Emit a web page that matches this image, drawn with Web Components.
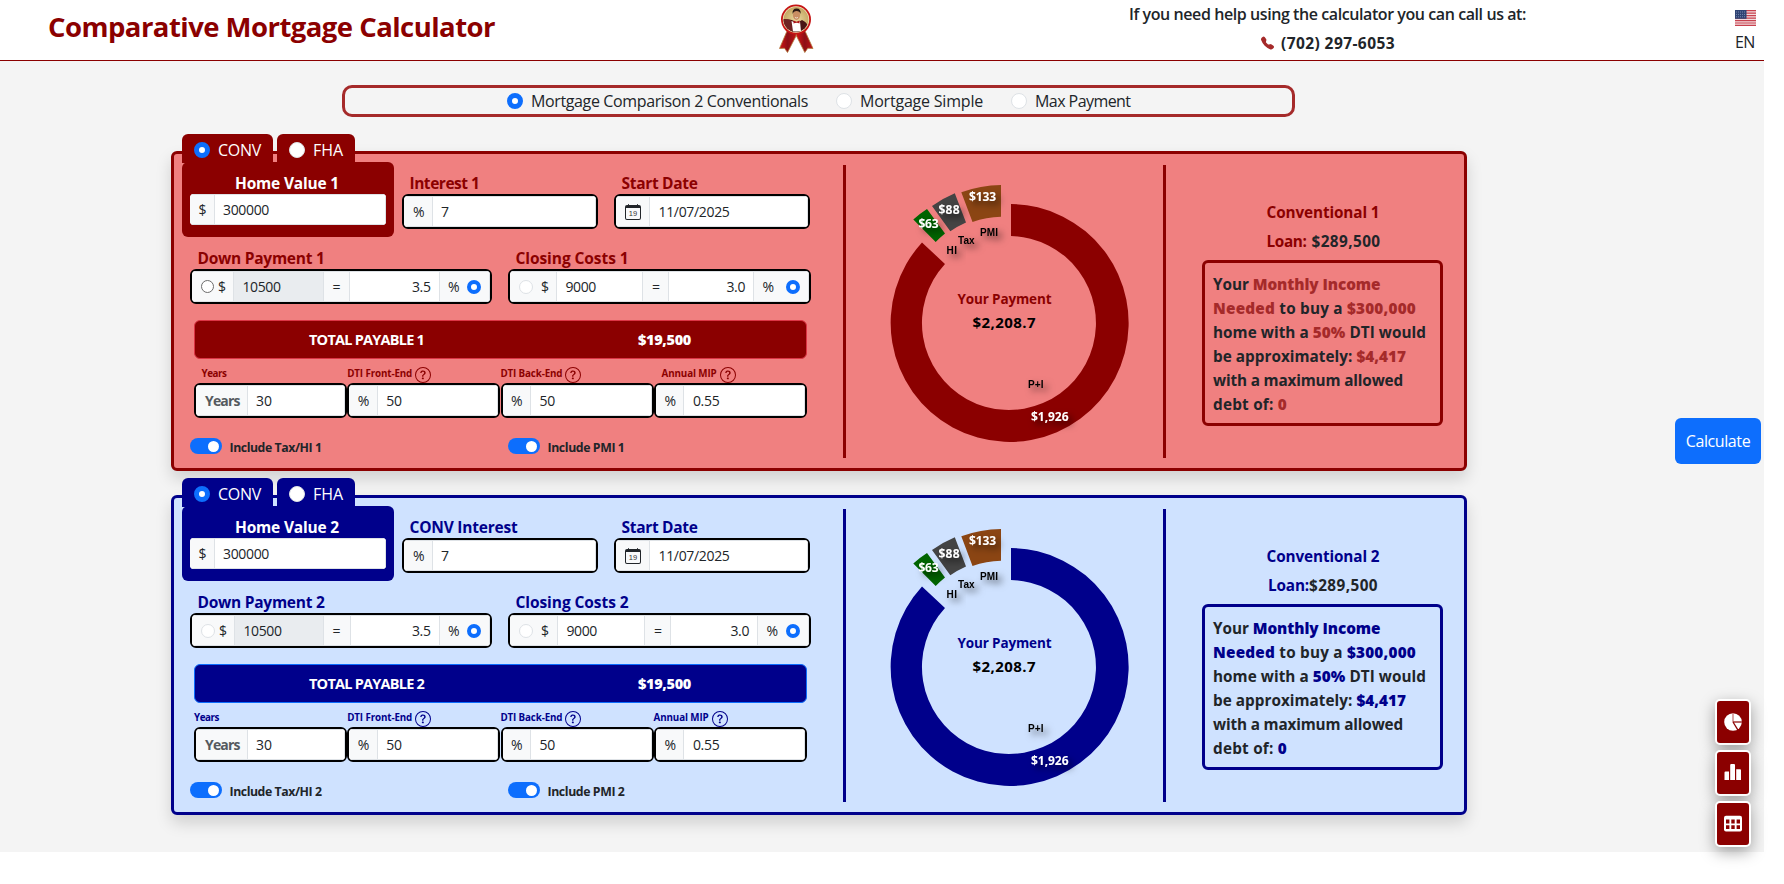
<!DOCTYPE html>
<html lang="en">
<head>
<meta charset="utf-8">
<title>Comparative Mortgage Calculator</title>
<style>
  html, body { margin: 0; background: #fff; }
  body { font-family: "Open Sans", "Noto Sans", sans-serif; font-size: 16px; line-height: 24px; color: #212529; height: 884px; overflow: hidden; }
</style>
</head>
<body>
<mortgage-app></mortgage-app>
<script>
const make = (name, html, setup) => {
  customElements.define(name, class extends HTMLElement {
    constructor() { super(); this.attachShadow({ mode: 'open' }); }
    connectedCallback() {
      if (this.ready) return;
      this.ready = true;
      this.shadowRoot.innerHTML = typeof html === 'function' ? html(this) : html;
      if (setup) setup(this);
    }
  });
};
const a = (el, n, d = '') => el.getAttribute(n) ?? d;

/* page */
make('mortgage-app', `
<style>
  :host { display: block; width: 1764px; height: 852px; background: #f4f4f4; position: relative; }
  main { display: flex; flex-direction: column; padding: 24px 0 0 171px; }
  mode-picker { margin-left: 171px; }
  loan-card { margin-top: 34px; }
  loan-card + loan-card { margin-top: 24px; }
  .calc { position: absolute; left: 1675px; top: 418px; }
  .tools { position: absolute; left: 1715px; top: 699px; display: grid; gap: 5px; }
</style>
<page-header></page-header>
<main>
  <mode-picker></mode-picker>
  <loan-card num="1" interest="Interest 1" ilabel="70" main="#8b0000" back="#f08080" edge="#dc3545" accent="#a52a2a"></loan-card>
  <loan-card num="2" interest="CONV Interest" ilabel="108" main="#00008b" back="#cfe2ff" edge="#0d6efd" accent="#00008b"></loan-card>
</main>
<calc-button class="calc"></calc-button>
<div class="tools">
  <tool-button><svg width="18" height="18" viewBox="0 0 18 18"><circle cx="9" cy="9" r="8.800" fill="#fff"/><path d="M9 0V9" stroke="#c98080" stroke-width="1.400"/><path d="M9 9H18" stroke="#a84040" stroke-width="1.600"/><path d="M9 9L13.800 16.800" stroke="#8b0000" stroke-width="1.300"/></svg></tool-button>
  <tool-button><svg width="18" height="18" viewBox="0 0 18 18"><path d="M.5 8.500q0-1 1-1H5V16H.5zM6.200 1q0-1 1-1H10q1 0 1 1V16H6.200zM12.200 5.200H16q1 0 1 1V16H12.200z" fill="#fff"/></svg></tool-button>
  <tool-button><svg width="18" height="18" viewBox="0 0 18 18"><rect y=".8" width="18" height="15.800" rx="2" fill="#fff"/><path d="M2 4.600h3.400v3.900H2zM7.300 4.600h3.400v3.900H7.300zM12.600 4.600H16v3.900h-3.400zM2 10.200h3.400v3.900H2zM7.300 10.200h3.400v3.900H7.300zM12.600 10.200H16v3.900h-3.400z" fill="#8b0000"/></svg></tool-button>
</div>`);

make('page-header', `
<style>
  :host { display: grid; grid-template-columns: 779px 350px 397px 209px 1fr; height: 60px; background: #fff; border-bottom: 1px solid #8b0000; }
  h1 { margin: 0; padding: 8px 0 0 48px; font-size: 27.500px; line-height: 38px; font-weight: 700; color: #8b0000; }
  .badge { padding-top: 4px; height: 50px; }
  .help { padding-top: 2px; font-weight: 550; display: flex; flex-direction: column; gap: 5px; }
  .phone { display: flex; align-items: center; padding-left: 132px; gap: 7px; font-weight: 700; }
  .lang { grid-column: 5; padding-top: 10px; display: flex; flex-direction: column; gap: 4px; }
  svg { display: block; }
</style>
<h1><fit-text w="447">Comparative Mortgage Calculator</fit-text></h1>
<div class="badge"><svg width="35" height="50" viewBox="0 0 35 50">
  <defs><linearGradient id="r"><stop stop-color="#d41416"/><stop offset=".5" stop-color="#8c0f16"/><stop offset="1" stop-color="#c01216"/></linearGradient>
  <radialGradient id="g"><stop stop-color="#e9d8a0"/><stop offset="1" stop-color="#b8974e"/></radialGradient><clipPath id="c"><circle cx="17" cy="15.500" r="12.400"/></clipPath></defs>
  <path d="M8 27L.5 44.500l5-.3L8.500 48.500 17 32V27z" fill="url(#r)" stroke="#b07a3a" stroke-width=".8"/>
  <path d="M26 27l8 17.500-5.200-.3-3 4.300L17.500 32V27z" fill="url(#r)" stroke="#b07a3a" stroke-width=".8"/>
  <circle cx="17" cy="15.600" r="15" fill="#c51414"/><circle cx="17" cy="15.500" r="13.200" fill="#efe3b8"/>
  <g clip-path="url(#c)"><rect width="35" height="30" fill="url(#g)"/><path d="M3 16q6-1 10 0l5 3 5-3q5 2 8 8v8H4z" fill="#4a1414"/><path d="M3 15q5-.5 9 1l3 12H5z" fill="#6d2222"/><path d="M12.500 17l5 2 3.500-1.500 1 10H14z" fill="#fff"/><path d="M14.500 16.500l3 1.200 3-1.200v3l-3-1-3 1z" fill="#b01218"/><ellipse cx="17.500" cy="11" rx="3.600" ry="5" fill="#c98e63"/><path d="M13.600 10q-.6-5.500 4-5.500t4 5.500q-1-3-4-3t-4 3z" fill="#2a1712"/><path d="M16 13.500q1.500 1 3 0" stroke="#fff" stroke-width=".7" fill="none"/></g>
</svg></div>
<div class="help">
  <fit-text w="397">If you need help using the calculator you can call us at:</fit-text>
  <div class="phone"><svg width="13" height="14" viewBox="0 0 16 16"><path fill="#a52a2a" d="M1.885.511a1.745 1.745 0 0 1 2.610.163L6.290 2.980c.329.423.445.974.315 1.494l-.547 2.190a.68.68 0 0 0 .178.643l2.457 2.457a.68.68 0 0 0 .644.178l2.189-.547a1.750 1.750 0 0 1 1.494.315l2.306 1.794c.829.645.905 1.870.163 2.611l-1.034 1.034c-.740.740-1.846 1.065-2.877.702a18.600 18.600 0 0 1-7.010-4.420 18.600 18.600 0 0 1-4.420-7.009c-.362-1.030-.037-2.137.703-2.877z"/></svg><fit-text w="114" style="font-size:15.500px">(702) 297-6053</fit-text></div>
</div>
<div class="lang">
  <svg width="21" height="16" viewBox="0 0 21 16"><rect width="21" height="16" fill="#f3dcdf"/><path d="M0 .6h21M0 3.200h21M0 5.700h21M0 8.200h21M0 10.600h21M0 13h21M0 15.400h21" stroke="#c8414e" stroke-width="1.200"/><rect width="11.500" height="8.800" fill="#2f4373"/><path d="M1 2h10M1 4.400h10M1 6.800h10" stroke="#8b9ac0" stroke-width=".8" stroke-dasharray="1 1"/></svg>
  <fit-text w="19.500">EN</fit-text>
</div>`);

make('mode-picker', `
<style>
  :host { display: flex; box-sizing: border-box; width: 953px; height: 32px; border: 3px solid #a52a2a; border-radius: 10px; padding-left: 162px; align-items: center; }
  fit-text { margin-left: 8px; }
  .n { margin-left: 28px; }
</style>
<radio-dot size="16" on></radio-dot><fit-text w="277">Mortgage Comparison 2 Conventionals</fit-text>
<radio-dot class="n" size="16"></radio-dot><fit-text w="123">Mortgage Simple</fit-text>
<radio-dot class="n" size="16"></radio-dot><fit-text w="95.500">Max Payment</fit-text>`);

make('radio-dot', el => `
<style>
  :host { display: block; flex: none; box-sizing: border-box; width: ${a(el, 'size')}px; height: ${a(el, 'size')}px; border-radius: 50%; background: #fff; border: 1px solid #dee2e6; }
  :host([on]) { border: ${a(el, 'size') / 3.200}px solid #0d6efd; }
  :host([plain]) { border: 1px solid #6c6c6c; }
</style>`);

make('calc-button', `
<style>
  :host { display: grid; place-items: center; width: 86px; height: 46px; border-radius: 6px; background: #0d6efd; color: #fff; }
</style><fit-text w="64.500">Calculate</fit-text>`);

make('tool-button', `
<style>
  :host { display: grid; place-items: center; box-sizing: border-box; width: 36px; height: 46px; border: 2px solid #fff; border-radius: 5px; background: #8b0000; box-shadow: 0 5px 15px rgba(0,0,0,.35); }
  ::slotted(svg) { display: block; }
</style><slot></slot>`);

/* input group: pieces divided by a thin line */
make('input-group', `
<style>
  :host { display: flex; box-sizing: border-box; height: 35px; border: 2px solid #000; border-radius: 6px; background: #fff; overflow: hidden; font-size: 14px; line-height: 31px; }
  :host([bare]) { height: 31px; border: 0; border-radius: 4px; }
</style><slot></slot>`);
make('group-cell', el => `
<style>
  :host { display: flex; align-items: center; box-sizing: border-box; width: ${a(el, 'w')}px; flex: ${a(el, 'w') ? 'none' : '1'}; height: 31px; padding-left: ${a(el, 'l', 0)}px; padding-right: ${a(el, 'r', 0)}px; gap: ${a(el, 'gap', 0)}px; background: #fff; border: 1px solid #dee2e6; border-left-width: 0; }
  :host([addon]) { background: #f8f9fa; }
  :host([off]) { background: #e9ecef; }
  :host([end]) { justify-content: flex-end; }
</style><slot></slot>`);

make('info-label', el => `
<style>
  :host { display: flex; box-sizing: border-box; width: 153.200px; height: 24px; padding-left: ${a(el, 'l', 0)}px; gap: 3px; font-size: 9.800px; line-height: 24px; font-weight: 700; }
  svg { margin-top: 8px; }
  fit-text { margin-top: 3px; }
</style><fit-text w="${a(el, 'w')}">${el.textContent}</fit-text>${el.hasAttribute('help') ? `<svg width="16" height="16" viewBox="0 0 16 16" fill="currentColor"><path d="M8 15A7 7 0 1 1 8 1a7 7 0 0 1 0 14m0 1A8 8 0 1 0 8 0a8 8 0 0 0 0 16"/><path d="M5.255 5.786a.237.237 0 0 0 .241.247h.825c.138 0 .248-.113.266-.25.090-.656.540-1.134 1.342-1.134.686 0 1.314.343 1.314 1.168 0 .635-.374.927-.965 1.371-.673.489-1.206 1.060-1.168 1.987l.003.217a.25.25 0 0 0 .25.246h.811a.25.25 0 0 0 .25-.25v-.105c0-.718.273-.927 1.010-1.486.609-.463 1.244-.977 1.244-2.056 0-1.511-1.276-2.241-2.673-2.241-1.267 0-2.655.590-2.750 2.286m1.557 5.763c0 .533.425.927 1.010.927.609 0 1.028-.394 1.028-.927 0-.552-.420-.940-1.029-.940-.584 0-1.009.388-1.009.940"/></svg>` : ''}`);

make('switch-row', el => `
<style>
  :host { display: flex; gap: 7.500px; font-size: 12.300px; font-weight: 700; color: #212529; line-height: 18px; height: 16px; }
  i { width: 32px; height: 16px; border-radius: 8px; background: #0d6efd; display: flex; justify-content: flex-end; align-items: center; box-sizing: border-box; padding-right: 3px; }
  i::after { content: ""; width: 11px; height: 11px; border-radius: 50%; background: #fff; }
  fit-text { margin-top: 1px; }
</style><i></i><fit-text w="${a(el, 'w')}">${el.textContent}</fit-text>`);

make('payment-chart', el => `
<style>
  :host { display: block; }
  svg { display: block; }
  .v { font: 700 12px "Open Sans", sans-serif; fill: #fff; filter: url(#s); }
  .k { font: 700 10px "Liberation Sans", sans-serif; fill: #000; filter: url(#s); }
  .c { font-family: "Open Sans", sans-serif; }
</style>
<svg width="317" height="293" viewBox="846 165 317 293">
  <defs><filter id="s" x="-60%" y="-80%" width="240%" height="300%"><feDropShadow dx="4" dy="4" stdDeviation="3.500" flood-color="#000" flood-opacity=".6"/></filter></defs>
  <path fill="${a(el, 'color')}" d="M1011 204A119 119 0 1 1 922 242.500L945 264A87 87 0 1 0 1011 236z"/>
  <path fill="#8b4513" d="M961.300 192.300A119 119 0 0 1 1001 185V216.800A87 87 0 0 0 972.500 222z"/>
  <path fill="#444" d="M932 206A119 119 0 0 1 954.800 193.300L966 222.400A87 87 0 0 0 950.300 231.300z"/>
  <path fill="#006400" d="M913.300 219.400A119 119 0 0 1 927 209L945 233.400A87 87 0 0 0 935.700 242z"/>
  <text class="v" x="969" y="201" textLength="27">$133</text>
  <text class="v" x="938.500" y="214" textLength="21">$88</text>
  <text class="v" x="918.500" y="228" textLength="20">$63</text>
  <text class="v" x="1031" y="421" textLength="37.500">$1,926</text>
  <text class="k" x="980" y="236" textLength="18">PMI</text>
  <text class="k" x="958" y="244" textLength="16.500">Tax</text>
  <text class="k" x="946.500" y="254" textLength="10.500">HI</text>
  <text class="k" x="1028" y="388" textLength="15.500">P+I</text>
  <text class="c" x="957.500" y="304" textLength="94" font-size="13.500" font-weight="700" fill="${a(el, 'color')}">Your Payment</text>
  <text class="c" x="972.500" y="328" textLength="63" font-size="15" font-weight="700" fill="#000">$2,208.7</text>
</svg>`);

make('loan-summary', el => {
  const n = a(el, 'num'), two = n === '2';
  return `
<style>
  :host { display: flex; flex-direction: column; width: 298px; box-sizing: border-box; padding: 45px 0 0 36px; font-size: 15.300px; line-height: 26px; font-weight: 700; }
  fit-text { height: 24px; }
  .head { color: ${a(el, 'color')}; margin-left: 64.500px; }
  .loan { display: flex; gap: ${two ? 0 : 5}px; margin: 5px 0 8px ${two ? 66 : 64.500}px; }
  .loan :first-child { color: ${a(el, 'color')}; }
  .box { box-sizing: border-box; width: 241px; height: 166px; border: 3px solid ${a(el, 'color')}; border-radius: 6px; padding: 8px; }
  b { font-weight: 800; color: ${a(el, 'accent')}; }
</style>
<fit-text class="head" w="113">Conventional ${n}</fit-text>
<div class="loan"><fit-text w="${two ? 41 : 40}">Loan:</fit-text><fit-text w="69">$289,500</fit-text></div>
<div class="box">
  <fit-text w="167.500">Your <b>Monthly Income</b></fit-text>
  <fit-text w="203">${'<b>Needed</b> to buy a <b>$300,000</b>'}</fit-text>
  <fit-text w="213">home with a <b>50%</b> DTI would</fit-text>
  <fit-text w="193">be approximately: <b>$4,417</b></fit-text>
  <fit-text w="190">with a maximum allowed</fit-text>
  <fit-text w="74">debt of: <b>0</b></fit-text>
</div>`;
});

make('loan-card', el => {
  const n = a(el, 'num'), two = n === '2', d = two ? 1 : 0;
  return `
<style>
  :host { display: flex; box-sizing: border-box; width: 1296px; height: 320px; border: 3px solid ${a(el, 'main')}; border-radius: 6px; background: ${a(el, 'back')}; box-shadow: 0 8px 16px rgba(0,0,0,.15); --main: ${a(el, 'main')}; }
  .form { width: 669px; box-sizing: border-box; padding-left: 8px; color: var(--main); }
  .tabs { display: flex; gap: 4px; height: 29px; margin: -20px 0 -1px; }
  .tab { display: flex; align-items: center; box-sizing: border-box; gap: 8px; height: 29px; padding: 0 0 0 12px; border-radius: 6px 6px 0 0; background: var(--main); color: #fff; }
  .tab radio-dot { margin-bottom: -2px; } .tab fit-text { margin-bottom: -3px; }
  .tab:first-child { width: 91px; } .tab:last-child { width: 78px; }
  .row { display: flex; }
  .home { width: 212px; height: 75px; box-sizing: border-box; padding: 8px 8px 0; border-radius: 6px; background: var(--main); color: #fff; }
  .lbl { font-weight: 700; font-size: 15.500px; margin-left: 7.500px; height: 24px; line-height: 26px; }
  .home .lbl { margin-left: 45px; }
  .col { padding-top: 8px; width: 196px; margin-left: 8px; }
  .col + .col { margin-left: 16px; }
  .row2 > div { margin: 8px 0 0 8px; width: 302px; }
  .row2 > div + div { margin-left: 16px; width: 303px; }
  input-group { color: #212529; }
  .total { display: flex; box-sizing: border-box; margin: 16px 0 0 12px; width: 613px; height: 39px; border: 1px solid ${a(el, 'edge')}; border-radius: 6px; background: var(--main); color: #fff; font-weight: 700; font-size: 14.500px; line-height: 38px; padding-left: 114px; }
  .total fit-text + fit-text { margin-left: 214px; font-weight: 800; }
  .labels, .four { margin-left: 12px; display: flex; }
  .four { display: grid; grid-template-columns: 153px 153px 153px 153px; gap: .3px; }
  .switches { display: grid; grid-template-columns: 318px 1fr; margin: 20px 0 0 8px; }
  .chart { box-sizing: border-box; width: 323px; margin: 11px 0 10px; border: solid var(--main); border-width: 0 3px; }
</style>
<div class="form">
  <div class="tabs">
    <div class="tab"><radio-dot size="16" on></radio-dot><fit-text w="43">CONV</fit-text></div>
    <div class="tab"><radio-dot size="16"></radio-dot><fit-text w="30">FHA</fit-text></div>
  </div>
  <div class="row">
    <div class="home"><fit-text class="lbl" w="104">Home Value ${n}</fit-text>
      <input-group bare><group-cell addon w="25" l="8.500"><fit-text w="7">$</fit-text></group-cell><group-cell l="8"><fit-text w="46">300000</fit-text></group-cell></input-group></div>
    <div class="col"><fit-text class="lbl" w="${a(el, 'ilabel')}">${a(el, 'interest')}</fit-text>
      <input-group><group-cell addon w="29" l="9"><fit-text w="11">%</fit-text></group-cell><group-cell l="8">7</group-cell></input-group></div>
    <div class="col"><fit-text class="lbl" w="76">Start Date</fit-text>
      <input-group><group-cell addon w="34" l="9"><svg width="16" height="16" viewBox="0 0 16 16"><path d="M3.500 0a.5.5 0 0 1 .5.5V1h8V.5a.5.5 0 0 1 1 0V1h1a2 2 0 0 1 2 2v11a2 2 0 0 1-2 2H2a2 2 0 0 1-2-2V3a2 2 0 0 1 2-2h1V.5a.5.5 0 0 1 .5-.5M1 4v10a1 1 0 0 0 1 1h12a1 1 0 0 0 1-1V4z" fill="#212529"/><text x="3.800" y="12.300" font-family="Liberation Sans" font-size="7.500" fill="#333" textLength="8.400">19</text></svg></group-cell><group-cell l="8.500"><fit-text w="71">11/07/2025</fit-text></group-cell></input-group></div>
  </div>
  <div class="row row2">
    <div><fit-text class="lbl" w="127">Down Payment ${n}</fit-text>
      <input-group><group-cell addon w="${41.500 + d}" l="9" gap="4"><radio-dot size="${two ? 14 : 13}" ${two ? '' : 'plain'}></radio-dot><fit-text w="7">$</fit-text></group-cell><group-cell off w="${90 - d}" l="9"><fit-text w="38">10500</fit-text></group-cell><group-cell addon w="${26 + d}" l="9">=</group-cell><group-cell end w="${90 - d}" r="8"><fit-text w="18.500">3.5</fit-text></group-cell><group-cell addon l="8.500" gap="8"><fit-text w="11">%</fit-text><radio-dot size="14" on></radio-dot></group-cell></input-group></div>
    <div><fit-text class="lbl" w="113">Closing Costs ${n}</fit-text>
      <input-group><group-cell addon w="${47 + d}" l="9" gap="8"><radio-dot size="14"></radio-dot><fit-text w="7">$</fit-text></group-cell><group-cell w="${two ? 87 : 86}" l="8.500"><fit-text w="30.500">9000</fit-text></group-cell><group-cell addon w="26" l="9">=</group-cell><group-cell end w="${two ? 87 : 85}" r="8"><fit-text w="18.500">3.0</fit-text></group-cell><group-cell addon l="8.500" gap="${two ? 8.500 : 12.500}"><fit-text w="11">%</fit-text><radio-dot size="14" on></radio-dot></group-cell></input-group></div>
  </div>
  <div class="total"><fit-text w="115">TOTAL PAYABLE ${n}</fit-text><fit-text w="53">$19,500</fit-text></div>
  <div class="labels"><info-label w="25" l="${two ? 0 : 7.500}">Years</info-label><info-label help w="65">DTI Front-End</info-label><info-label help w="62">DTI Back-End</info-label><info-label help w="55" l="${two ? 0 : 8}">Annual MIP</info-label></div>
  <div class="four">
    <input-group><group-cell addon w="51.500" l="9"><fit-text w="34.500" style="font-weight:700;color:#555a5f">Years</fit-text></group-cell><group-cell l="8.500"><fit-text w="16">30</fit-text></group-cell></input-group>
    <input-group><group-cell addon w="28.500" l="8.500"><fit-text w="11">%</fit-text></group-cell><group-cell l="8.500"><fit-text w="15.500">50</fit-text></group-cell></input-group>
    <input-group><group-cell addon w="28.500" l="8.500"><fit-text w="11">%</fit-text></group-cell><group-cell l="8.500"><fit-text w="15.500">50</fit-text></group-cell></input-group>
    <input-group><group-cell addon w="28.500" l="8.500"><fit-text w="11">%</fit-text></group-cell><group-cell l="8.500"><fit-text w="26.500">0.55</fit-text></group-cell></input-group>
  </div>
  <div class="switches"><switch-row w="92">Include Tax/HI ${n}</switch-row><switch-row w="77">Include PMI ${n}</switch-row></div>
</div>
<div class="chart"><payment-chart color="${a(el, 'main')}"></payment-chart></div>
<loan-summary num="${n}" color="${a(el, 'main')}" accent="${a(el, 'accent')}"></loan-summary>`;
});

/* one line of text, tracked so that it fills the width w */
make('fit-text', `
<style>
  :host { display: block; white-space: nowrap; }
  span { display: inline-block; vertical-align: top; }
</style><span><slot></slot></span>`, el => {
  const w = parseFloat(a(el, 'w')), n = el.textContent.length;
  const natural = el.shadowRoot.querySelector('span').getBoundingClientRect().width;
  if (w && natural && n > 1) el.style.letterSpacing = ((w - natural) / n).toFixed(3) + 'px';
  if (w) el.style.width = w + 'px';
});
</script>
</body>
</html>
